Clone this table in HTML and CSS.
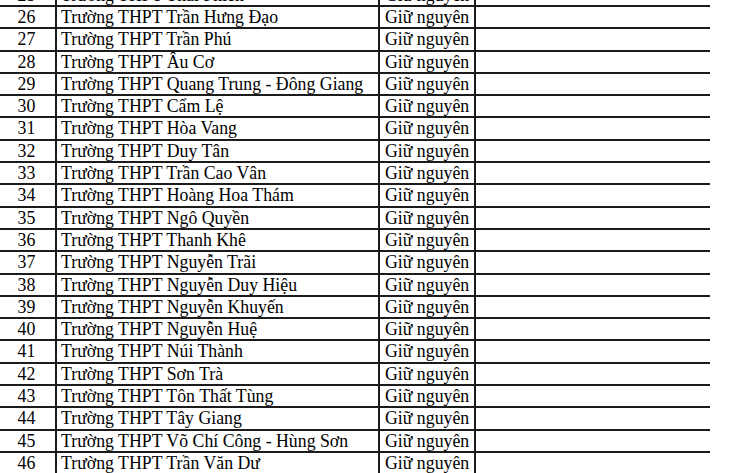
FILE: index.html
```html
<!DOCTYPE html>
<html lang="vi">
<head>
<meta charset="utf-8">
<link rel="stylesheet" href="styles.css">
</head>
<body>
<div class="sheet">
  <div class="table">
    <div class="row"><div class="c num">25</div><div class="c name">Trường THPT Thái Phiên</div><div class="c st">Giữ nguyên</div><div class="c blank"></div></div>
    <div class="row"><div class="c num">26</div><div class="c name">Trường THPT Trần Hưng Đạo</div><div class="c st">Giữ nguyên</div><div class="c blank"></div></div>
    <div class="row"><div class="c num">27</div><div class="c name">Trường THPT Trần Phú</div><div class="c st">Giữ nguyên</div><div class="c blank"></div></div>
    <div class="row"><div class="c num">28</div><div class="c name">Trường THPT Âu Cơ</div><div class="c st">Giữ nguyên</div><div class="c blank"></div></div>
    <div class="row"><div class="c num">29</div><div class="c name">Trường THPT Quang Trung - Đông Giang</div><div class="c st">Giữ nguyên</div><div class="c blank"></div></div>
    <div class="row"><div class="c num">30</div><div class="c name">Trường THPT Cẩm Lệ</div><div class="c st">Giữ nguyên</div><div class="c blank"></div></div>
    <div class="row"><div class="c num">31</div><div class="c name">Trường THPT Hòa Vang</div><div class="c st">Giữ nguyên</div><div class="c blank"></div></div>
    <div class="row"><div class="c num">32</div><div class="c name">Trường THPT Duy Tân</div><div class="c st">Giữ nguyên</div><div class="c blank"></div></div>
    <div class="row"><div class="c num">33</div><div class="c name">Trường THPT Trần Cao Vân</div><div class="c st">Giữ nguyên</div><div class="c blank"></div></div>
    <div class="row"><div class="c num">34</div><div class="c name">Trường THPT Hoàng Hoa Thám</div><div class="c st">Giữ nguyên</div><div class="c blank"></div></div>
    <div class="row"><div class="c num">35</div><div class="c name">Trường THPT Ngô Quyền</div><div class="c st">Giữ nguyên</div><div class="c blank"></div></div>
    <div class="row"><div class="c num">36</div><div class="c name">Trường THPT Thanh Khê</div><div class="c st">Giữ nguyên</div><div class="c blank"></div></div>
    <div class="row"><div class="c num">37</div><div class="c name">Trường THPT Nguyễn Trãi</div><div class="c st">Giữ nguyên</div><div class="c blank"></div></div>
    <div class="row"><div class="c num">38</div><div class="c name">Trường THPT Nguyễn Duy Hiệu</div><div class="c st">Giữ nguyên</div><div class="c blank"></div></div>
    <div class="row"><div class="c num">39</div><div class="c name">Trường THPT Nguyễn Khuyến</div><div class="c st">Giữ nguyên</div><div class="c blank"></div></div>
    <div class="row"><div class="c num">40</div><div class="c name">Trường THPT Nguyễn Huệ</div><div class="c st">Giữ nguyên</div><div class="c blank"></div></div>
    <div class="row"><div class="c num">41</div><div class="c name">Trường THPT Núi Thành</div><div class="c st">Giữ nguyên</div><div class="c blank"></div></div>
    <div class="row"><div class="c num">42</div><div class="c name">Trường THPT Sơn Trà</div><div class="c st">Giữ nguyên</div><div class="c blank"></div></div>
    <div class="row"><div class="c num">43</div><div class="c name">Trường THPT Tôn Thất Tùng</div><div class="c st">Giữ nguyên</div><div class="c blank"></div></div>
    <div class="row"><div class="c num">44</div><div class="c name">Trường THPT Tây Giang</div><div class="c st">Giữ nguyên</div><div class="c blank"></div></div>
    <div class="row"><div class="c num">45</div><div class="c name">Trường THPT Võ Chí Công - Hùng Sơn</div><div class="c st">Giữ nguyên</div><div class="c blank"></div></div>
    <div class="row"><div class="c num">46</div><div class="c name">Trường THPT Trần Văn Dư</div><div class="c st">Giữ nguyên</div><div class="c blank"></div></div>
  </div>
</div>
</body>
</html>
```

FILE: styles.css
```css
html, body {
  margin: 0;
  padding: 0;
  background: #ffffff;
}
body {
  width: 730px;
  height: 473px;
  overflow: hidden;
}
.sheet {
  width: 730px;
  height: 473px;
  overflow: hidden;
}
.table {
  width: 710px;
  margin-top: -15.3px;
  font-family: "Liberation Serif", "Times New Roman", serif;
  font-size: 17.8px;
  color: #000;
}
.row {
  display: grid;
  grid-template-columns: 57px 323px 96px 234px;
  height: 22.3px;
  box-sizing: border-box;
  border-bottom: 2px solid #1c1c1c;
}
.c {
  box-sizing: border-box;
  border-right: 2px solid #1c1c1c;
  line-height: 20.3px;
  white-space: nowrap;
  overflow: hidden;
}
.num {
  text-align: center;
  padding-right: 2px;
}
.name {
  padding-left: 4px;
}
.st {
  padding-left: 5px;
}
.blank {
  border-right: none;
}
```
